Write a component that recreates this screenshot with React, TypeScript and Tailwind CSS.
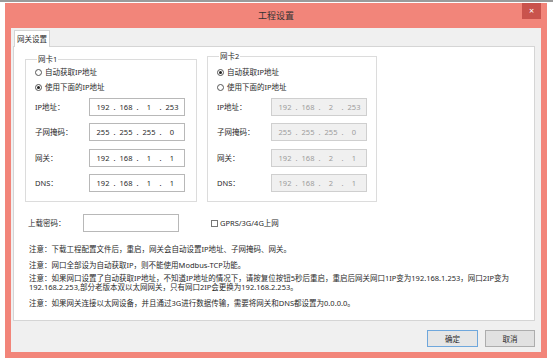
import { Fragment } from "react";

const IpField = ({ parts, disabled }: { parts: string[]; disabled?: boolean }) => {
    return (
        <div
            className={`flex h-[18px] w-[96px] items-center border pl-[4px] text-[7.5px] leading-[10px] ${
                disabled ? "border-[#cfcfcf] bg-[#f0f0f0] text-[#9c9c9c]" : "border-[#b8b8b8] bg-white text-[#2a2a2a]"
            }`}
        >
            {parts.map((p, i) => (
                <Fragment key={i}>
                    {i > 0 && <span className="w-[5px] text-center">.</span>}
                    <span className="w-[18px] text-center">{p}</span>
                </Fragment>
            ))}
        </div>
    );
};

const Radio = ({ checked, label }: { checked?: boolean; label: string }) => (
    <div className="flex h-[12px] items-center gap-[3px]">
        <span className="flex size-[7px] items-center justify-center rounded-full border border-[#555] bg-white">
            {checked && <span className="size-[3px] rounded-full bg-[#222]" />}
        </span>
        <span>{label}</span>
    </div>
);

const Row = ({ label, parts, disabled, className }: { label: string; parts: string[]; disabled?: boolean; className?: string }) => (
    <div className={`flex items-center ${className ?? ""}`}>
        <span className="w-[54px]">{label}</span>
        <IpField parts={parts} disabled={disabled} />
    </div>
);

const NetCard = ({
    title,
    auto,
    values,
    className,
}: {
    title: string;
    auto: boolean;
    values: string[][];
    className: string;
}) => (
    <fieldset className={`border border-[#dcdcdc] px-[9px] ${className}`}>
        <legend className="ml-[2px] px-[1px] text-[7.5px] leading-[10px]">{title}</legend>
        <Radio checked={auto} label="自动获取IP地址" />
        <div className="mt-[3px]">
            <Radio checked={!auto} label="使用下面的IP地址" />
        </div>
        <Row className="mt-[5px]" label="IP地址：" parts={values[0]} disabled={auto} />
        <Row className="mt-[7px]" label="子网掩码：" parts={values[1]} disabled={auto} />
        <Row className="mt-[8px]" label="网关：" parts={values[2]} disabled={auto} />
        <Row className="mt-[7px]" label="DNS：" parts={values[3]} disabled={auto} />
    </fieldset>
);

export default function App() {
    return (
        <div className="min-h-[362px] bg-white font-['Noto_Sans','Noto_Sans_CJK_SC',sans-serif] text-[7.5px] text-[#2a2a2a]">
            <div className="h-[2px] bg-[#9a9a9a]" />
            <div className="ml-[5px] mt-[1px] flex h-[355px] w-[542px] flex-col bg-[#f2857a]">
                {/* Title bar */}
                <div className="relative flex h-[25px] items-center justify-center">
                    <span className="text-[9px] leading-[12px] text-[#333]">工程设置</span>
                    <div className="absolute right-[6px] top-0 flex h-[16px] w-[19px] items-center justify-center bg-[#c9534d] text-[9px] leading-[10px] text-white">
                        ×
                    </div>
                </div>

                {/* Body */}
                <div className="mx-[6px] mb-[6px] flex flex-1 flex-col bg-[#f0f0f0] pl-[2px] pr-[6px] pt-[2px]">
                    <div className="flex">
                        <div className="relative z-10 -mb-px ml-[1px] flex h-[17px] w-[36px] items-center justify-center border border-b-0 border-[#d5d5d5] bg-white leading-[10px]">
                            网关设置
                        </div>
                    </div>
                    <div className="flex flex-col border border-[#d5d5d5] bg-white pb-[13px] pl-[11px] pt-[4px] leading-[10px]">
                        <div className="flex items-start gap-[10px]">
                            <NetCard
                                title="网卡1"
                                auto={false}
                                className="mt-[3px] w-[172px] pb-[9px] pt-[2px]"
                                values={[
                                    ["192", "168", "1", "253"],
                                    ["255", "255", "255", "0"],
                                    ["192", "168", "1", "1"],
                                    ["192", "168", "1", "1"],
                                ]}
                            />
                            <NetCard
                                title="网卡2"
                                auto={true}
                                className="w-[167px] pb-[9px] pt-[5px]"
                                values={[
                                    ["192", "168", "2", "253"],
                                    ["255", "255", "255", "0"],
                                    ["192", "168", "2", "1"],
                                    ["192", "168", "2", "1"],
                                ]}
                            />
                        </div>

                        <div className="mt-[12px] flex items-center pl-[3px]">
                            <span className="w-[55px]">上载密码：</span>
                            <div className="h-[18px] w-[96px] border border-[#b8b8b8] bg-white" />
                            <div className="ml-[32px] flex items-center gap-[2px]">
                                <span className="size-[7px] border border-[#777] bg-white" />
                                <span>GPRS/3G/4G上网</span>
                            </div>
                        </div>

                        <div className="mt-[13px] flex flex-col pl-[4px] leading-[8px]">
                            <p>注意：下载工程配置文件后，重启，网关会自动设置IP地址、子网掩码、网关。</p>
                            <p className="mt-[8px]">注意：网口全部设为自动获取IP，则不能使用Modbus-TCP功能。</p>
                            <p className="mt-[5px] leading-[9px]">
                                注意：如果网口设置了自动获取IP地址，不知道IP地址的情况下，请按复位按钮5秒后重启，重启后网关网口1IP变为192.168.1.253，网口2IP变为
                                <br />
                                192.168.2.253,部分老版本双以太网网关，只有网口2IP会更换为192.168.2.253。
                            </p>
                            <p className="mt-[7px]">注意：如果网关连接以太网设备，并且通过3G进行数据传输，需要将网关和DNS都设置为0.0.0.0。</p>
                        </div>
                    </div>

                    <div className="mt-[9px] flex justify-end gap-[7px]">
                        <button
                            type="button"
                            className="flex h-[17px] w-[51px] items-center justify-center border border-[#6fa7dc] bg-[#e6e6e6] leading-[10px]"
                        >
                            确定
                        </button>
                        <button
                            type="button"
                            className="flex h-[17px] w-[50px] items-center justify-center border border-[#adadad] bg-[#e1e1e1] leading-[10px]"
                        >
                            取消
                        </button>
                    </div>
                </div>
            </div>
        </div>
    );
}
